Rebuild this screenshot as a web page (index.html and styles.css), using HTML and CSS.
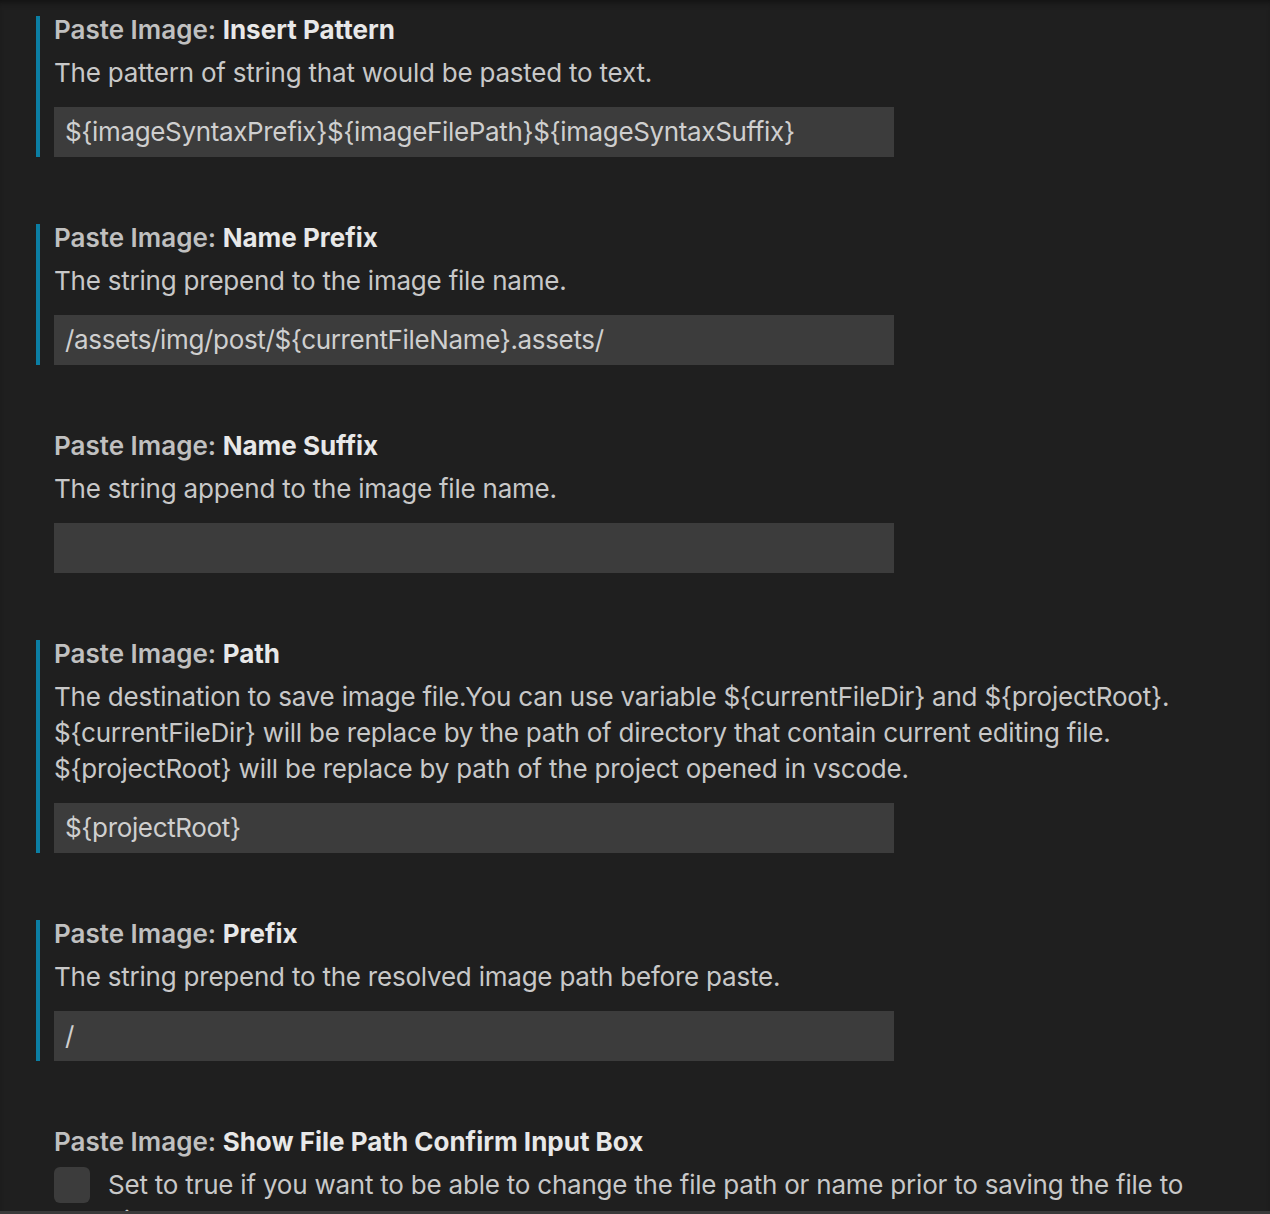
FILE: index.html
```html
<!DOCTYPE html>
<html lang="en">
<head>
<meta charset="utf-8">
<title>Settings</title>
<link rel="stylesheet" href="styles.css">
</head>
<body>
<div class="page">
  <div class="list">
    <div class="setting modified">
      <div class="title"><span class="cat">Paste Image: </span><span class="name">Insert Pattern</span></div>
      <div class="desc">The pattern of string that would be pasted to text.</div>
      <div class="input">${imageSyntaxPrefix}${imageFilePath}${imageSyntaxSuffix}</div>
    </div>
    <div class="setting modified">
      <div class="title"><span class="cat">Paste Image: </span><span class="name">Name Prefix</span></div>
      <div class="desc">The string prepend to the image file name.</div>
      <div class="input">/assets/img/post/${currentFileName}.assets/</div>
    </div>
    <div class="setting">
      <div class="title"><span class="cat">Paste Image: </span><span class="name">Name Suffix</span></div>
      <div class="desc">The string append to the image file name.</div>
      <div class="input"></div>
    </div>
    <div class="setting modified">
      <div class="title"><span class="cat">Paste Image: </span><span class="name">Path</span></div>
      <div class="desc">The destination to save image file.You can use variable ${currentFileDir} and ${projectRoot}. ${currentFileDir} will be replace by the path of directory that contain current editing file. ${projectRoot} will be replace by path of the project opened in vscode.</div>
      <div class="input">${projectRoot}</div>
    </div>
    <div class="setting modified">
      <div class="title"><span class="cat">Paste Image: </span><span class="name">Prefix</span></div>
      <div class="desc">The string prepend to the resolved image path before paste.</div>
      <div class="input">/</div>
    </div>
    <div class="setting">
      <div class="title"><span class="cat">Paste Image: </span><span class="name">Show File Path Confirm Input Box</span></div>
      <div class="check-row">
        <div class="checkbox"></div>
        <div class="desc">Set to true if you want to be able to change the file path or name prior to saving the file to disk</div>
      </div>
    </div>
  </div>
  <div class="bottom-bar"></div>
</div>
</body>
</html>
```

FILE: styles.css
```css
html, body {
  margin: 0;
  padding: 0;
  background: #1f1f1f;
}
body {
  font-family: Inter, "Noto Sans", "Liberation Sans", sans-serif;
  font-size: 26px;
  color: #cccccc;
}
.page {
  position: relative;
  width: 1270px;
  height: 1214px;
  overflow: hidden;
  background: #1f1f1f;
  box-shadow: inset 0 6px 6px -4px #111111;
}
.list {
  display: flex;
  flex-direction: column;
  gap: 67px;
  padding: 16px 0 0 36px;
  width: 1164px;
}
.setting {
  border-left: 4px solid transparent;
  padding-left: 14px;
}
.setting.modified {
  border-left-color: #0b7ea3;
}
.title {
  line-height: 28px;
  height: 28px;
  margin-bottom: 10px;
  font-weight: 600;
  white-space: nowrap;
}
.cat {
  color: #c0c0c0;
}
.name {
  color: #e8e8e8;
  font-weight: 700;
}
.desc {
  line-height: 36px;
  color: #c8c8c8;
  padding-top: 1px;
  margin-bottom: 16px;
  letter-spacing: -0.22px;
}
.input {
  width: 840px;
  height: 50px;
  box-sizing: border-box;
  background: #3c3c3c;
  color: #cfcfcf;
  line-height: 50px;
  padding-left: 11px;
  white-space: nowrap;
  letter-spacing: -0.35px;
}
.check-row {
  display: flex;
  align-items: flex-start;
  gap: 18px;
  margin-top: 1px;
}
.checkbox {
  flex: none;
  width: 36px;
  height: 36px;
  border-radius: 6px;
  background: #3c3c3c;
  margin-top: 1px;
}
.check-row .desc {
  margin: 0;
}
.bottom-bar {
  position: absolute;
  left: 0;
  right: 0;
  bottom: 0;
  height: 3px;
  background: #3a3a3a;
}
```
